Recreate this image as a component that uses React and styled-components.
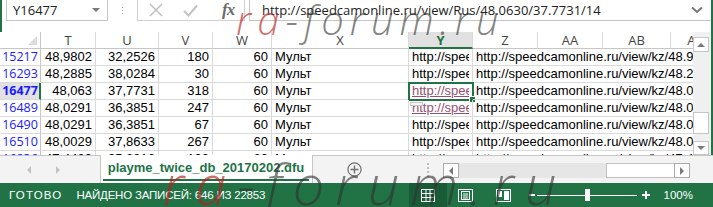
import React from 'react';
import styled, { createGlobalStyle } from 'styled-components';

const GREEN = '#217346';

const GlobalStyle = createGlobalStyle`
  html, body {
    margin: 0;
    padding: 0;
    background: #fff;
  }
  body {
    font-family: "Liberation Sans", Arial, sans-serif;
  }
`;

const Window = styled.div`
  position: relative;
  width: 713px;
  height: 207px;
  overflow: hidden;
  background: #fff;
  display: flex;
  flex-direction: column;
`;

/* ---------- formula bar ---------- */

const FormulaBar = styled.div`
  height: 32px;
  flex: none;
  display: flex;
  align-items: flex-start;
  border-left: 2px solid ${GREEN};
  border-right: 2px solid ${GREEN};
  box-sizing: border-box;
`;

const NameBox = styled.div`
  margin-left: 4px;
  width: 102px;
  height: 21px;
  box-sizing: border-box;
  border: 1px solid #c6c6c6;
  border-top: none;
  display: flex;
  align-items: center;
  justify-content: space-between;
  padding: 0 7px 0 6px;
  font-family: "Open Sans", "Liberation Sans", sans-serif;
  font-size: 13px;
  color: #222;
`;

const DropTriangle = styled.span`
  width: 0;
  height: 0;
  border-left: 4px solid transparent;
  border-right: 4px solid transparent;
  border-top: 4px solid #7a7a7a;
`;

const Dots = styled.div`
  margin: 7px 0 0 14px;
  display: flex;
  flex-direction: column;
  gap: 2px;
  span {
    width: 1px;
    height: 1px;
    background: #a0a0a0;
  }
`;

const FxGroup = styled.div`
  margin-left: 14px;
  width: 108px;
  height: 21px;
  box-sizing: border-box;
  border: 1px solid #d0d0d0;
  border-top: none;
  display: flex;
  align-items: center;
  padding-left: 11px;
  gap: 20px;
`;

const FxLabel = styled.span`
  font-family: "Liberation Serif", "Times New Roman", serif;
  font-style: italic;
  font-weight: bold;
  font-size: 17px;
  color: #6b6b6b;
  margin-left: 4px;
  letter-spacing: -1px;
`;

const FormulaInput = styled.div`
  flex: 1;
  margin-left: 4px;
  height: 21px;
  box-sizing: border-box;
  border: 1px solid #c6c6c6;
  border-top: none;
  border-right: none;
  display: flex;
  align-items: center;
  justify-content: space-between;
  padding: 0 8px 0 12px;
  font-family: "Open Sans", "Liberation Sans", sans-serif;
  font-size: 13px;
  color: #222;
`;

/* ---------- sheet ---------- */

const Sheet = styled.div`
  height: 123px;
  flex: none;
  display: flex;
  border-right: 2px solid ${GREEN};
`;

const Grid = styled.div`
  width: 693px;
  flex: none;
  overflow: hidden;
  display: grid;
  grid-template-columns: 41px 55px 63px 54px 59px 137px 64px 65px 65px 68px 50px;
  grid-auto-rows: 17px;
`;

const ColHead = styled.div`
  box-sizing: border-box;
  border-right: 1px solid #dadada;
  border-bottom: ${p => (p.$active ? `2px solid ${GREEN}` : '1px solid #c6c6c6')};
  background: ${p => (p.$active ? '#e1e1e1' : '#fff')};
  color: ${p => (p.$active ? GREEN : '#444')};
  font-family: "Open Sans", "Liberation Sans", sans-serif;
  font-size: 13px;
  font-weight: ${p => (p.$active ? 700 : 400)};
  line-height: 16px;
  text-align: center;
  white-space: nowrap;
  overflow: hidden;
`;

const Corner = styled.div`
  box-sizing: border-box;
  border-right: 1px solid #c6c6c6;
  border-bottom: 1px solid #c6c6c6;
  display: flex;
  align-items: flex-end;
  justify-content: flex-end;
  padding: 0 3px 3px 0;
  span {
    width: 0;
    height: 0;
    border-left: 9px solid transparent;
    border-bottom: 9px solid #dcdcdc;
  }
`;

const RowHead = styled.div`
  box-sizing: border-box;
  border-right: ${p => (p.$active ? `2px solid ${GREEN}` : '1px solid #c6c6c6')};
  border-bottom: 1px solid #dadada;
  background: ${p => (p.$active ? '#e1e1e1' : '#fff')};
  color: #1a1aff;
  font-family: "Open Sans", "Liberation Sans", sans-serif;
  font-size: 12.5px;
  font-weight: ${p => (p.$active ? 700 : 400)};
  line-height: 16px;
  text-align: center;
  padding-left: ${p => (p.$active ? '1px' : '0')};
`;

const Cell = styled.div`
  position: relative;
  box-sizing: border-box;
  border-right: 1px solid #dadada;
  border-bottom: 1px solid #dadada;
  padding: 0 3px;
  font-size: 13px;
  line-height: 16px;
  color: #000;
  text-align: ${p => (p.$num ? 'right' : 'left')};
  white-space: nowrap;
  overflow: ${p => (p.$selected ? 'visible' : 'hidden')};
  grid-column: ${p => (p.$span ? `span ${p.$span}` : 'auto')};
`;

const Clip = styled.div`
  overflow: hidden;
  width: 100%;
`;

const Link = styled.span`
  color: ${p => (p.$visited ? '#954f72' : '#000')};
  text-decoration: ${p => (p.$visited ? 'underline' : 'none')};
`;

const Selection = styled.div`
  position: absolute;
  top: -1px;
  left: -1px;
  right: -2px;
  bottom: -2px;
  border: 2px solid ${GREEN};
  pointer-events: none;
`;

const FillHandle = styled.div`
  position: absolute;
  right: -4px;
  bottom: -4px;
  width: 5px;
  height: 5px;
  background: ${GREEN};
  border: 1px solid #fff;
`;

const SmartTag = styled.div`
  position: absolute;
  left: 1px;
  top: 19px;
  width: 11px;
  height: 2px;
  border: 1px solid #c8c8c8;
  background: #f4f4f4;
  z-index: 2;
`;

const VScroll = styled.div`
  width: 18px;
  flex: none;
  background: #f0f0f0;
  display: flex;
  flex-direction: column;
  align-items: flex-start;
  padding-top: 5px;
  box-sizing: border-box;
`;

const ScrollButton = styled.div`
  width: 16px;
  height: ${p => p.$h || 15}px;
  box-sizing: border-box;
  border: 1px solid #c6c6c6;
  background: #fff;
  display: flex;
  align-items: center;
  justify-content: center;
  flex: none;
`;

const ScrollTrack = styled.div`
  flex: 1;
  width: 16px;
`;

const VThumb = styled.div`
  margin-top: 60px;
  width: 16px;
  height: 22px;
  box-sizing: border-box;
  border: 1px solid #c6c6c6;
  background: #fff;
`;

const Arrow = styled.span`
  width: 0;
  height: 0;
  border-left: 4px solid transparent;
  border-right: 4px solid transparent;
  ${p => (p.$dir === 'up' ? 'border-bottom: 4px solid #7a7a7a;' : 'border-top: 4px solid #7a7a7a;')}
`;

const SideArrow = styled.span`
  width: 0;
  height: 0;
  border-top: 4px solid transparent;
  border-bottom: 4px solid transparent;
  ${p => (p.$dir === 'left'
    ? `border-right: 4px solid ${p.$light ? '#c4c4c4' : '#7a7a7a'};`
    : `border-left: 4px solid ${p.$light ? '#c4c4c4' : '#7a7a7a'};`)}
`;

/* ---------- sheet tabs ---------- */

const TabBar = styled.div`
  height: 28px;
  flex: none;
  display: flex;
  background: #f3f3f3;
`;

const TabNav = styled.div`
  width: 101px;
  flex: none;
  box-sizing: border-box;
  border-top: 1px solid #c6c6c6;
  border-right: 1px solid #c6c6c6;
  display: flex;
  align-items: center;
  padding-left: 27px;
  gap: 25px;
`;

const ActiveTab = styled.div`
  width: 212px;
  flex: none;
  box-sizing: border-box;
  background: #fff;
  border-right: 1px solid #c6c6c6;
  display: flex;
  flex-direction: column;
  align-items: center;
  padding: 0 3px 2px 2px;
`;

const TabLabel = styled.div`
  flex: 1;
  display: flex;
  align-items: center;
  font-size: 13px;
  font-weight: bold;
  color: ${GREEN};
  padding-top: 1px;
`;

const TabLine = styled.div`
  align-self: stretch;
  height: 2px;
  background: ${GREEN};
`;

const TabRest = styled.div`
  flex: 1;
  box-sizing: border-box;
  border-top: 1px solid #c6c6c6;
  display: flex;
  align-items: center;
  padding-left: 34px;
`;

const VDots = styled.div`
  margin-left: 65px;
  display: flex;
  flex-direction: column;
  gap: 2px;
  span {
    width: 2px;
    height: 2px;
    background: #bdbdbd;
  }
`;

const HScroll = styled.div`
  margin-left: 14px;
  width: 247px;
  height: 15px;
  display: flex;
  background: #e6e6e6;
  margin-top: 2px;
`;

const HButton = styled.div`
  width: 16px;
  height: 15px;
  box-sizing: border-box;
  border: 1px solid #ababab;
  background: #fff;
  display: flex;
  align-items: center;
  justify-content: center;
  flex: none;
`;

const HThumb = styled.div`
  margin-left: auto;
  width: 68px;
  height: 15px;
  box-sizing: border-box;
  border: 1px solid #c2c2c2;
  border-right: none;
  background: #fff;
`;

/* ---------- status bar ---------- */

const StatusBar = styled.div`
  height: 24px;
  flex: none;
  background: ${GREEN};
  color: #fff;
  display: flex;
  align-items: stretch;
  font-size: 11.5px;
  padding: 0 20px 0 9px;
`;

const StatusText = styled.span`
  display: flex;
  align-items: center;
  margin-left: ${p => p.$ml || 0}px;
  letter-spacing: ${p => p.$ls || 0}px;
  white-space: nowrap;
`;

const StatusRight = styled.div`
  margin-left: auto;
  display: flex;
  align-items: stretch;
`;

const ViewButton = styled.div`
  width: 38px;
  flex: none;
  display: flex;
  align-items: center;
  justify-content: center;
  background: ${p => (p.$active ? '#195b36' : 'transparent')};
`;

const ZoomSlider = styled.div`
  margin-left: 6px;
  display: flex;
  align-items: center;
`;

const Minus = styled.span`
  width: 6px;
  height: 2px;
  background: #fff;
`;

const SliderLine = styled.div`
  position: relative;
  margin-left: 2px;
  width: 100px;
  height: 1px;
  background: #fff;
`;

const SliderThumb = styled.span`
  position: absolute;
  left: 48px;
  top: -6px;
  width: 5px;
  height: 12px;
  background: #fff;
`;

const Plus = styled.span`
  position: relative;
  margin-left: 5px;
  width: 8px;
  height: 8px;
  &::before, &::after {
    content: '';
    position: absolute;
    background: #fff;
  }
  &::before { left: 0; top: 3px; width: 8px; height: 2px; }
  &::after { left: 3px; top: 0; width: 2px; height: 8px; }
`;

/* ---------- watermark ---------- */

const Watermark = styled.div`
  position: absolute;
  left: ${p => p.$x}px;
  top: ${p => p.$y}px;
  font-family: "Open Sans", "Liberation Sans", sans-serif;
  font-weight: 300;
  font-style: italic;
  font-size: ${p => p.$size}px;
  line-height: ${p => p.$size}px;
  letter-spacing: ${p => p.$ls}px;
  white-space: nowrap;
  pointer-events: none;
  color: rgba(50, 50, 50, 0.62);
  span {
    color: rgba(185, 30, 30, 0.66);
  }
`;

const rows = [
  { n: '15217', t: '48,9802', u: '32,2526', v: '180', z: '48.9802/32.2526/180' },
  { n: '16293', t: '48,2885', u: '38,0284', v: '30', z: '48.2885/38.0284/30' },
  { n: '16477', t: '48,063', u: '37,7731', v: '318', z: '48.0630/37.7731/318', active: true, visited: true },
  { n: '16489', t: '48,0291', u: '36,3851', v: '247', z: '48.0291/36.3851/247', visited: true },
  { n: '16490', t: '48,0291', u: '36,3851', v: '67', z: '48.0291/36.3851/67' },
  { n: '16510', t: '48,0029', u: '37,8633', v: '267', z: '48.0029/37.8633/267' },
  { n: '16836', t: '47,4409', u: '35,2816', v: '190', z: '47.4409/35.2816/190' },
];

const columns = ['T', 'U', 'V', 'W', 'X', 'Y', 'Z', 'AA', 'AB', 'AC'];

const CancelIcon = () => (
  <svg width="14" height="14" viewBox="0 0 14 14">
    <path d="M1 1 L13 13 M13 1 L1 13" stroke="#c2c2c2" strokeWidth="1.6" fill="none" />
  </svg>
);

const EnterIcon = () => (
  <svg width="15" height="13" viewBox="0 0 15 13">
    <path d="M1 7 L5.5 11.5 L14 1.5" stroke="#c2c2c2" strokeWidth="2" fill="none" />
  </svg>
);

const Chevron = () => (
  <svg width="12" height="8" viewBox="0 0 12 8">
    <path d="M1 1.5 L6 6 L11 1.5" stroke="#777" strokeWidth="2" fill="none" />
  </svg>
);

const PlusCircle = () => (
  <svg width="15" height="15" viewBox="0 0 15 15">
    <circle cx="7.5" cy="7.5" r="6.6" stroke="#707070" strokeWidth="1.2" fill="none" />
    <path d="M7.5 3.5 V11.5 M3.5 7.5 H11.5" stroke="#707070" strokeWidth="1.4" />
  </svg>
);

const NormalIcon = () => (
  <svg width="14" height="13" viewBox="0 0 14 13">
    <rect x="0.5" y="0.5" width="13" height="12" stroke="#fff" fill="none" />
    <path d="M5 0.5 V12.5 M9 0.5 V12.5 M0.5 4.5 H13.5 M0.5 8.5 H13.5" stroke="#fff" />
  </svg>
);

const LayoutIcon = () => (
  <svg width="15" height="13" viewBox="0 0 15 13">
    <rect x="0.5" y="0.5" width="14" height="12" stroke="#fff" fill="none" />
    <rect x="3.5" y="2.5" width="8" height="8" stroke="#fff" fill="none" />
    <path d="M5 5 H10 M5 7 H10 M5 9 H10" stroke="#fff" />
  </svg>
);

const BreakIcon = () => (
  <svg width="15" height="13" viewBox="0 0 15 13">
    <rect x="0.5" y="0.5" width="14" height="12" stroke="#fff" fill="none" />
    <rect x="2" y="2" width="4" height="6" fill="#fff" />
    <rect x="8" y="2" width="5" height="9" fill="#fff" />
  </svg>
);

export default function App() {
  return (
    <Window>
      <GlobalStyle />
      <FormulaBar>
        <NameBox>
          Y16477
          <DropTriangle />
        </NameBox>
        <Dots><span /><span /><span /></Dots>
        <FxGroup>
          <CancelIcon />
          <EnterIcon />
          <FxLabel>fx</FxLabel>
        </FxGroup>
        <FormulaInput>
          <span>http://speedcamonline.ru/view/Rus/48.0630/37.7731/14</span>
          <Chevron />
        </FormulaInput>
      </FormulaBar>

      <Sheet>
        <Grid>
          <Corner><span /></Corner>
          {columns.map(c => (
            <ColHead key={c} $active={c === 'Y'}>{c}</ColHead>
          ))}
          {rows.map(r => (
            <React.Fragment key={r.n}>
              <RowHead $active={r.active}>{r.n}</RowHead>
              <Cell $num>{r.t}</Cell>
              <Cell $num>{r.u}</Cell>
              <Cell $num>{r.v}</Cell>
              <Cell $num>60</Cell>
              <Cell>Мульт</Cell>
              <Cell $selected={r.active}>
                <Clip>
                  <Link $visited={r.visited}>
                    {`http://speedcamonline.ru/view/Rus/${r.z}`}
                  </Link>
                </Clip>
                {r.active && (
                  <>
                    <Selection><FillHandle /></Selection>
                    <SmartTag />
                  </>
                )}
              </Cell>
              <Cell $span={4}>{`http://speedcamonline.ru/view/kz/${r.z}`}</Cell>
            </React.Fragment>
          ))}
        </Grid>
        <VScroll>
          <ScrollButton><Arrow $dir="up" /></ScrollButton>
          <ScrollTrack><VThumb /></ScrollTrack>
          <ScrollButton $h={14}><Arrow $dir="down" /></ScrollButton>
        </VScroll>
      </Sheet>

      <TabBar>
        <TabNav>
          <SideArrow $dir="left" $light />
          <SideArrow $dir="right" $light />
        </TabNav>
        <ActiveTab>
          <TabLabel>playme_twice_db_20170202.dfu</TabLabel>
          <TabLine />
        </ActiveTab>
        <TabRest>
          <PlusCircle />
          <VDots><span /><span /><span /><span /></VDots>
          <HScroll>
            <HButton><SideArrow $dir="left" /></HButton>
            <HThumb />
            <HButton><SideArrow $dir="right" /></HButton>
          </HScroll>
        </TabRest>
      </TabBar>

      <StatusBar>
        <StatusText $ls={1.2}>ГОТОВО</StatusText>
        <StatusText $ml={14} $ls={-0.2}>НАЙДЕНО ЗАПИСЕЙ: 646 ИЗ 22853</StatusText>
        <StatusRight>
          <ViewButton $active><NormalIcon /></ViewButton>
          <ViewButton><LayoutIcon /></ViewButton>
          <ViewButton><BreakIcon /></ViewButton>
          <ZoomSlider>
            <Minus />
            <SliderLine><SliderThumb /></SliderLine>
            <Plus />
          </ZoomSlider>
          <StatusText $ml={14}>100%</StatusText>
        </StatusRight>
      </StatusBar>

      <Watermark $x={236} $y={0} $size={40} $ls={6}>
        <span>ra</span>-forum.ru
      </Watermark>
      <Watermark $x={163} $y={155} $size={56} $ls={11}>
        <span>ra</span>-forum.ru
      </Watermark>
    </Window>
  );
}
